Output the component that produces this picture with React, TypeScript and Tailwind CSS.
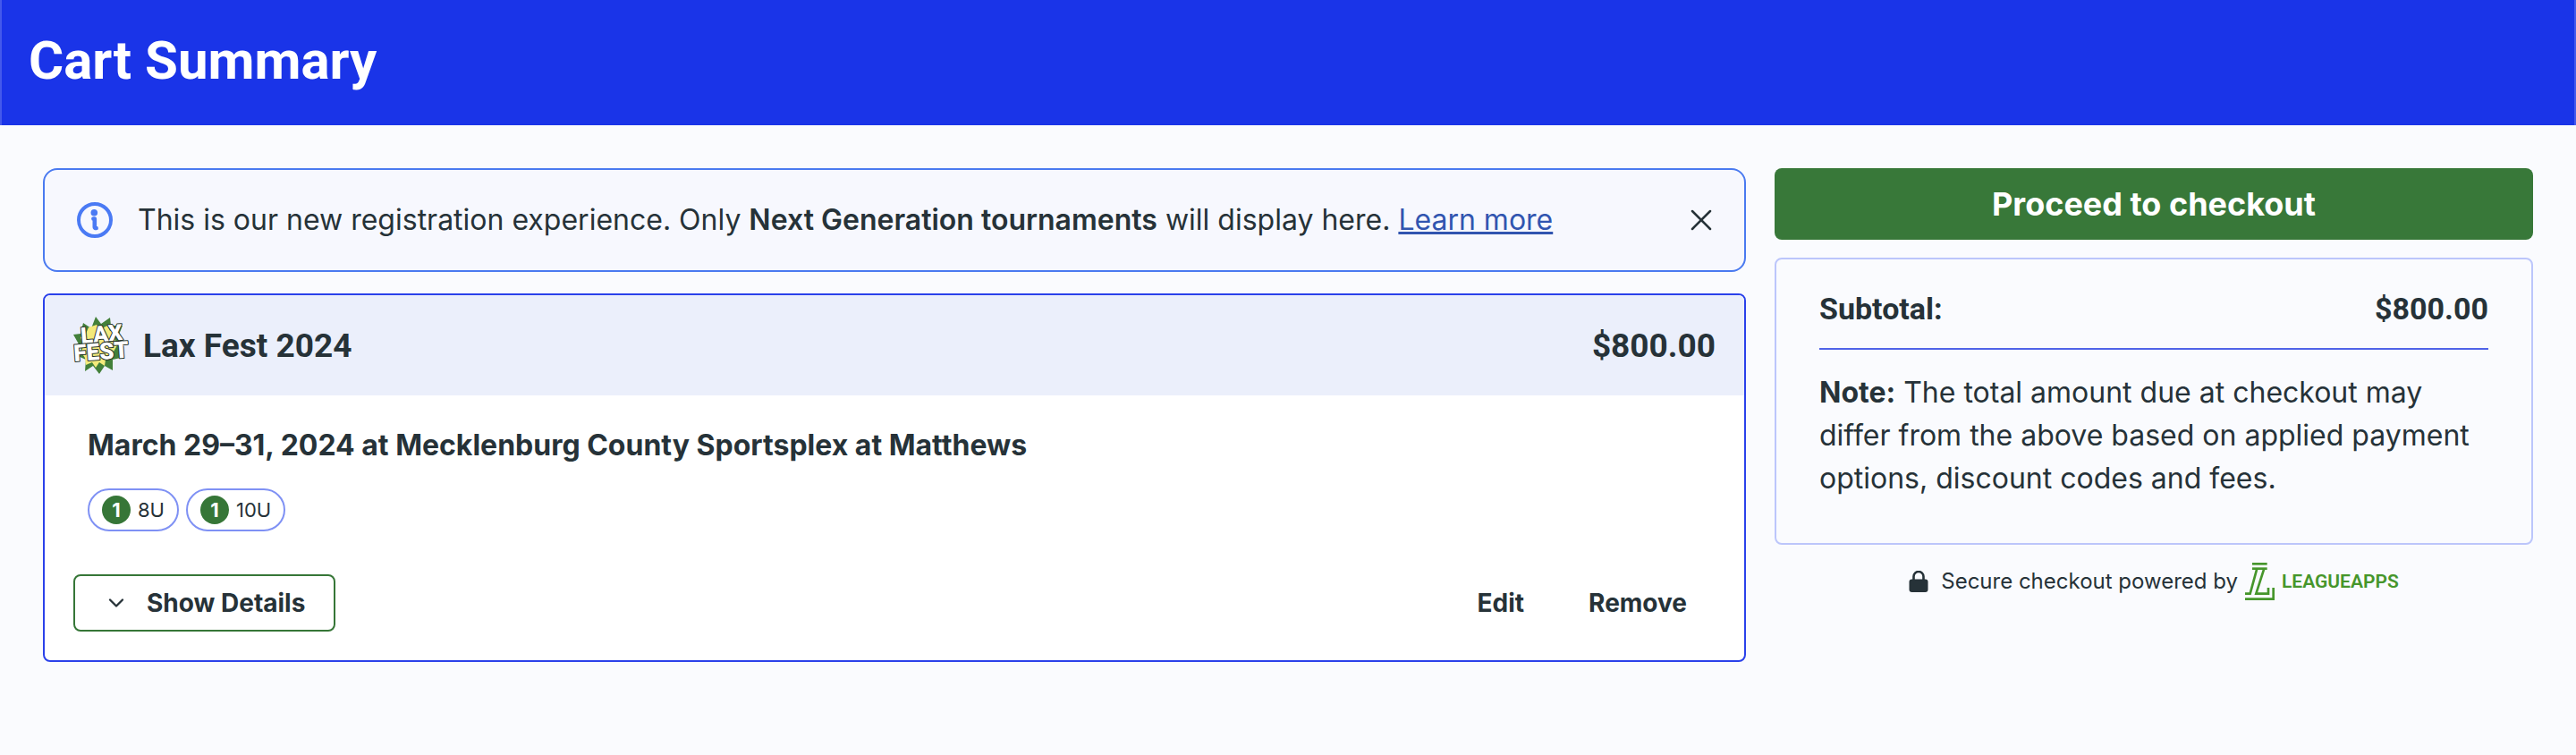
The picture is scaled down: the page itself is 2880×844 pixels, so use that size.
import React from 'react';
import { ChevronDown, X } from 'lucide-react';

const divisions = [
  { name: '8U', count: 1 },
  { name: '10U', count: 1 },
];

const InfoIcon = () => (
  <svg viewBox="0 0 40 40" className="size-10 shrink-0" fill="none" aria-hidden="true">
    <circle cx="20" cy="20" r="18" stroke="#4a7af4" strokeWidth="4" />
    <circle cx="19.3" cy="11.7" r="3.8" fill="#4a7af4" />
    <path
      d="M18.4 18.6h1.4v9.2q0 1.4 1.8 1.2"
      stroke="#4a7af4"
      strokeWidth="4.6"
      strokeLinecap="round"
      strokeLinejoin="round"
    />
  </svg>
);

const LockIcon = () => (
  <svg viewBox="0 0 22 24" className="h-6 w-[22px] shrink-0" aria-hidden="true">
    <path d="M5.5 11V6.5a5.5 5.5 0 0 1 11 0V11" fill="none" stroke="#263238" strokeWidth="2.6" />
    <rect x="0.5" y="9.5" width="21" height="14.5" rx="3" fill="#263238" />
  </svg>
);

const LaxFestLogo = () => (
  <svg
    viewBox="0 0 60 64"
    className="h-16 w-[60px] shrink-0 overflow-visible"
    role="img"
    aria-label="Lax Fest"
  >
    <path
      d="M25 0l6 8 10-7 1 9 13 0-4 10 5 8-5 8 2 10-9 2 0 12-9-5-6 9-7-9-9 6 1-13-9-4 4-8-9-16 8-1 3-12 9 6z"
      fill="#43803a"
    />
    <path
      d="M26 9l4 5 8-4 3 6 7 0-2 8 3 8-4 7-1 7-8 2-1 7-6-4-4 6-4-6-7 3-1-8-4-6 2-8-3-9 6-4 3-7z"
      fill="#f3ea7b"
    />
    <g
      fontFamily="Roboto, sans-serif"
      fontWeight="900"
      fill="#fff"
      stroke="#263228"
      strokeWidth="2"
      paintOrder="stroke"
      strokeLinejoin="round"
    >
      <text x="9" y="30" fontSize="25" transform="rotate(-5 9 30)">
        LAX
      </text>
      <text x="1" y="50" fontSize="26" transform="rotate(-4 1 50)">
        FEST
      </text>
    </g>
  </svg>
);

const LeagueAppsMark = () => (
  <svg
    viewBox="0 0 99 126"
    className="h-[42px] w-[33px] shrink-0"
    fill="none"
    stroke="#46962b"
    strokeWidth="8"
    aria-hidden="true"
  >
    <path d="M24 4h50" />
    <path d="M24 20h50" />
    <path d="M40 20L17 104H0" />
    <path d="M64 20L37 104H78V84" />
    <path d="M0 122H95V84" />
  </svg>
);

const App = () => {
  return (
    <div className="min-h-screen bg-[#fafbfe] font-['Inter',sans-serif] text-[#263238]">
      <header className="flex h-[140px] items-center border-x-2 border-[#4459ec] bg-[#1a34e8] px-[30px] pb-1">
        <h1 className="font-['Roboto',sans-serif] text-[60px] leading-none font-bold text-white">
          Cart Summary
        </h1>
      </header>

      <main className="grid grid-cols-[119fr_53fr] items-start gap-8 p-12">
        <div className="flex flex-col gap-6">
          {/* Notice */}
          <div className="flex h-[116px] items-center gap-7 rounded-2xl border-2 border-[#4a7af0] bg-[#f7f8fe] pr-7 pl-9">
            <InfoIcon />
            <p className="grow text-[32px] leading-10">
              This is our new registration experience. Only{' '}
              <strong className="font-semibold">Next Generation tournaments</strong> will display here.{' '}
              <a href="#learn-more" className="text-[#3155b0] underline">
                Learn more
              </a>
            </p>
            <button type="button" aria-label="Dismiss">
              <X className="size-10" strokeWidth={1.5} />
            </button>
          </div>

          {/* Cart item */}
          <section className="overflow-hidden rounded-lg border-2 border-[#2a41ea] bg-white">
            <div className="flex h-28 items-center gap-[18px] bg-[#ebeffb] px-8 font-['Roboto',sans-serif] text-[37px] leading-none font-bold">
              <LaxFestLogo />
              <h2>Lax Fest 2024</h2>
              <span className="ml-auto">$800.00</span>
            </div>
            <div className="px-12 pt-9">
              <h3 className="text-[32px] leading-10 font-bold">
                March 29–31, 2024 at Mecklenburg County Sportsplex at Matthews
              </h3>
              <ul className="mt-7 flex gap-2">
                {divisions.map((division) => (
                  <li
                    key={division.name}
                    className="flex h-12 items-center gap-2 rounded-full border-2 border-[#7f91f4] px-3.5 text-[22px]"
                  >
                    <span className="flex size-8 items-center justify-center rounded-full bg-[#367637] font-bold text-white">
                      {division.count}
                    </span>
                    {division.name}
                  </li>
                ))}
              </ul>
            </div>
            <div className="flex items-center gap-2 px-8 pt-12 pb-8 text-[28px] leading-8 font-bold">
              <button
                type="button"
                className="mr-auto flex h-16 items-center gap-5 rounded-lg border-2 border-[#367637] px-8"
              >
                <ChevronDown className="size-7" strokeWidth={2} />
                Show Details
              </button>
              <button type="button" className="h-16 px-8">
                Edit
              </button>
              <button type="button" className="h-16 px-8">
                Remove
              </button>
            </div>
          </section>
        </div>

        <aside>
          <button
            type="button"
            className="h-20 w-full rounded-lg bg-[#387839] text-[36px] font-bold text-white"
          >
            Proceed to checkout
          </button>
          <div className="mt-5 rounded-lg border-2 border-[#bcc6fb] px-12 pb-12">
            <div className="flex h-[101px] items-center justify-between border-b-2 border-[#4f63e8] pt-3 font-['Roboto',sans-serif] text-[34px] font-bold">
              <span>Subtotal:</span>
              <span>$800.00</span>
            </div>
            <p className="mt-6 text-[32px] leading-12">
              <strong className="font-bold">Note:</strong> The total amount due at checkout may differ
              from the above based on applied payment options, discount codes and fees.
            </p>
          </div>
          <div className="mt-5 flex items-center justify-center text-2xl">
            <LockIcon />
            <span className="mr-2 ml-3.5">Secure checkout powered by</span>
            <LeagueAppsMark />
            <span className="ml-2 font-['Roboto',sans-serif] text-[21px] font-semibold text-[#46962b]">
              LEAGUEAPPS
            </span>
          </div>
        </aside>
      </main>
    </div>
  );
};

export default App;
